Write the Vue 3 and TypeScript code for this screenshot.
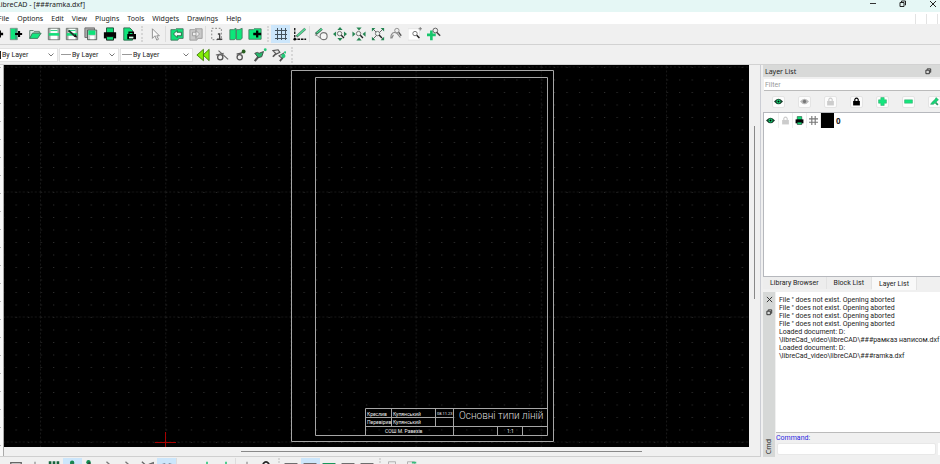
<script setup lang="ts">
interface Tool { icon: string; label: string; on?: boolean }
interface Group { name: string; lead: string; tools: Tool[] }

const t = (icon: string, label: string, on = false): Tool => ({ icon, label, on })

const menus: string[] = ['File', 'Options', 'Edit', 'View', 'Plugins', 'Tools', 'Widgets', 'Drawings', 'Help']

const mainGroups: Group[] = [
  { name: 'file', lead: '', tools: [t('new', 'New'), t('template', 'New from template'), t('open', 'Open'), t('save', 'Save'), t('saveas', 'Save as'), t('saveall', 'Save all'), t('print', 'Print'), t('preview', 'Print preview')] },
  { name: 'pick', lead: 'handle', tools: [t('cursor', 'Select')] },
  { name: 'pair', lead: 'sep', tools: [t('undo', 'Undo'), t('redo', 'Redo')] },
  { name: 'clip', lead: 'sep', tools: [t('cut', 'Cut'), t('copy', 'Copy'), t('paste', 'Paste')] },
  { name: 'grid', lead: 'handle', tools: [t('grid', 'Grid', true), t('draft', 'Draft')] },
  { name: 'zoom', lead: 'sep', tools: [t('redraw', 'Redraw'), t('zoomin', 'Zoom in'), t('zoomout', 'Zoom out'), t('zoomauto', 'Auto zoom'), t('zoomprev', 'Previous view'), t('zoomwin', 'Window zoom'), t('pan', 'Zoom panning')] }
]

const penTools: Tool[] = [t('back', 'Back'), t('circ', 'Pick pen'), t('circdot', 'Apply pen'), t('brush', 'Pen by active layer'), t('brushes', 'Copy pen')]

const snapGroups: Group[] = [
  { name: 'snap', lead: '', tools: [t('box', 'Exclusive snap'), t('tickmark', 'Free snap'), t('dots', 'Snap on grid'), t('point', 'Snap on endpoints', true), t('pointr', 'Snap on entity'), t('slope', 'Snap center'), t('slope', 'Snap middle'), t('slopes', 'Snap distance'), t('specks', 'Snap intersection', true)] },
  { name: 'restrict', lead: 'sep', tools: [t('', 'Restrict nothing'), t('plus', 'Restrict orthogonal'), t('plus', 'Restrict horizontal')] },
  { name: 'zero', lead: 'sep', tools: [t('tickmark', 'Set relative zero'), t('minilock', 'Lock relative zero')] },
  { name: 'dock', lead: 'handle', tools: [t('panel', 'Left dock'), t('panel', 'Right dock', true), t('panelg', 'Top dock'), t('panel', 'Bottom dock'), t('panel', 'Floating dock')] },
  { name: 'order', lead: 'handle', tools: [t('sheet', 'Move to top'), t('sheetg', 'Move to bottom')] }
]

const pens = [
  { name: 'color', label: 'Pen colour' },
  { name: 'width', label: 'Line width' },
  { name: 'type', label: 'Line type' }
]

const layerTools: Tool[] = [t('eye', 'Show all layers'), t('eyeoff', 'Hide all layers'), t('unlock', 'Unlock all layers'), t('lock', 'Lock all layers'), t('add', 'Add layer'), t('remove', 'Remove layer'), t('edit', 'Edit layer')]
const layerFlags: Tool[] = [t('eye', 'Visible'), t('unlock', 'Locked'), t('print', 'Print'), t('hash', 'Construction')]
const tabs: string[] = ['Library Browser', 'Block List', 'Layer List']

const log: string[] = [
  "File '' does not exist. Opening aborted",
  "File '' does not exist. Opening aborted",
  "File '' does not exist. Opening aborted",
  "File '' does not exist. Opening aborted",
  'Loaded document: D:',
  '\\libreCad_video\\libreCAD\\###рамказ написом.dxf',
  'Loaded document: D:',
  '\\libreCad_video\\libreCAD\\###ramka.dxf'
]
</script>

<template>
  <div class="app">
    <svg class="defs" aria-hidden="true">
      <symbol id="new" viewBox="0 0 16 16"><path d="M1 2h7v12H1z" fill="#0fef80" stroke="#555"/><path d="M7 8h8M11 4v8" stroke="#000" stroke-width="3"/></symbol>
      <symbol id="template" viewBox="0 0 16 16"><path d="M1.500 1.500h8v13h-8z" fill="#0fe77c" stroke="#7c9488"/><path d="M8 2v12" stroke="#567"/><path d="M7 8h8M11.500 4.500v7" stroke="#000" stroke-width="2.400"/></symbol>
      <symbol id="open" viewBox="0 0 16 16"><path d="M2 13V4h4l1 1h6v2H6z" fill="#d9eee4" stroke="#547365"/><path d="M2 13l3-6h10l-4 6z" fill="#12e77e" stroke="#3f7258"/></symbol>
      <symbol id="save" viewBox="0 0 16 16"><path d="M1.500 1.500h13v13h-13z" fill="#a4aaa7" stroke="#68706c"/><path d="M4 2h8v5H4z" fill="#f5fff9"/><path d="M2 7h12v3H2z" fill="#0fe37a"/><path d="M4 10h8v4H4z" fill="#fff"/><path d="M4 4h8" stroke="#18d279"/></symbol>
      <symbol id="saveas" viewBox="0 0 16 16"><use href="#save"/><path d="M4 4l7 6" stroke="#24372e" stroke-width="2"/><path d="M10 11l4 1-2-4z" fill="#111"/></symbol>
      <symbol id="saveall" viewBox="0 0 16 16"><path d="M1 1h11v11H1z" fill="#aaa" stroke="#686868"/><path d="M4 3.500h10.500v11H4z" fill="#c9cfcc" stroke="#4c5550"/><path d="M5 4h8v5H5z" fill="#0fe37a"/><path d="M7 10h5v4H7z" fill="#fff"/></symbol>
      <symbol id="print" viewBox="0 0 16 16"><path d="M4 1h8v6H4z" fill="#0ddd76" stroke="#154a30"/><path d="M1 6h14v7H1z" fill="#050505"/><path d="M4 11h8v4H4z" fill="#0fe37a" stroke="#111"/></symbol>
      <symbol id="preview" viewBox="0 0 16 16"><path d="M2 1h7l3 3v11H2z" fill="#0fe37a" stroke="#32664c"/><path d="M6 8h10v6H6z"/><path d="M8 9V6h5v3" fill="none" stroke="#000" stroke-width="1.500"/><path d="M8 12h5" stroke="#d7ffea" stroke-width="2"/></symbol>
      <symbol id="cursor" viewBox="0 0 16 16"><path d="M5 2v11l3-3 2 5 2-1-2-4h3z" fill="#f9f9f9" stroke="#858585"/></symbol>
      <symbol id="undo" viewBox="0 0 16 16"><path d="M1 3h5l1-1h8v11h-5l-1 2H1z" fill="#0fe37a" stroke="#47745e"/><path d="M4 8l4-4v2h5v4H8v2z" fill="#effff7" stroke="#24583d"/></symbol>
      <symbol id="redo" viewBox="0 0 16 16"><path d="M1 3h5l1-1h8v11h-5l-1 2H1z" fill="#c9c9c9" stroke="#999"/><path d="M8 2v12M12 8L8 4v2H4v4h4v2z" fill="#efefef" stroke="#999"/></symbol>
      <symbol id="cut" viewBox="0 0 16 16"><path d="M2 1.500h11v13H2z" fill="none" stroke="#777" stroke-dasharray="2 2"/><path d="M11 7v7M8 14h6M9 8h2" stroke="#444" stroke-width="1.500"/></symbol>
      <symbol id="copy" viewBox="0 0 16 16"><path d="M1 3h4l3-1.500V13l-2 1.500H1zM8.500 3h3L15 1.500V13l-2 1.500H8.500z" fill="#0ce77a" stroke="#497c62"/></symbol>
      <symbol id="paste" viewBox="0 0 16 16"><path d="M1 3h5l1-1h8v12H1z" fill="#0ce77a" stroke="#497c62"/><path d="M6 8h9M10.500 4v8" stroke="#000" stroke-width="2.600"/></symbol>
      <symbol id="grid" viewBox="0 0 14 14"><path d="M1 3.500h12M1 7.500h12M1 11.500h12M3.500 1v12M7.500 1v12M11.500 1v12" stroke="#44525c"/></symbol>
      <symbol id="draft" viewBox="0 0 16 16"><path d="M2 1v13h13" fill="none" stroke="#111" stroke-width="1.500" stroke-dasharray="3 1"/><path d="M4 11L14 2" stroke="#557f6a" stroke-width="3"/><path d="M5 10l9-8" stroke="#51e69a" stroke-width="1.300"/><circle cx="2" cy="14" r="1.500"/></symbol>
      <symbol id="redraw" viewBox="0 0 16 16"><circle cx="11" cy="10.500" r="4" fill="#f6f6f6" stroke="#777" stroke-width="1.300"/><path d="M2 8l7-6" stroke="#39664f" stroke-width="3"/><path d="M3 7l6-5" stroke="#50e59a" stroke-width="1.300"/><path d="M1 9l3 1 3 3" fill="none" stroke="#777"/></symbol>
      <symbol id="lens" viewBox="0 0 16 16"><circle cx="7.500" cy="7.500" r="2.500" fill="#eef5f1" stroke="#666"/><path d="M9.500 9.500l3 3" stroke="#222" stroke-width="1.600"/></symbol>
      <symbol id="zoomin" viewBox="0 0 16 16"><use href="#lens"/><path d="M8 0l3 3.500H5zM8 16l3-3.500H5zM0 8l3.500-3v6zM16 8l-3.500-3v6z" fill="#268653"/></symbol>
      <symbol id="zoomout" viewBox="0 0 16 16"><use href="#lens"/><path d="M8 4l3-3.500H5zM8 12l3 3.500H5zM4 8L.500 5v6zM12 8l3.500-3v6z" fill="#268653"/></symbol>
      <symbol id="zoomauto" viewBox="0 0 16 16"><path d="M2 2l12 12M14 2L2 14" stroke="#555"/><use href="#lens"/><path d="M1 1h4L1 5zM15 1v4l-4-4zM1 15v-4l4 4zM15 15h-4l4-4z" fill="#268653"/></symbol>
      <symbol id="zoomprev" viewBox="0 0 16 16"><path d="M2 13c0-6 3-8 7-6l4 5M3 13l2-4" fill="none" stroke="#888" stroke-width="1.300"/><circle cx="9" cy="4" r="2.500" fill="#eee" stroke="#888"/><path d="M11 6l3 4" stroke="#555" stroke-width="1.500"/></symbol>
      <symbol id="zoomwin" viewBox="0 0 16 16"><path d="M0 2h13v13H0z" fill="#fff" stroke="#e2e2e2"/><circle cx="8" cy="7.500" r="2.500" fill="#fff" stroke="#666"/><path d="M10 9.500l3 3" stroke="#222" stroke-width="1.800"/><path d="M12 2h4M14 0v4" stroke="#777"/></symbol>
      <symbol id="pan" viewBox="0 0 16 16"><path d="M0 9h10M5 4v11" stroke="#17c66c" stroke-width="3"/><circle cx="9.500" cy="4" r="2.700" fill="#eee" stroke="#555"/><path d="M11 6l4 4" stroke="#444" stroke-width="1.800"/></symbol>
      <symbol id="back" viewBox="0 0 16 16"><path d="M8.500 1.500v13L1 8zM15 1.500v13L8 8z" fill="#84ef09" stroke="#3f7810"/></symbol>
      <symbol id="circ" viewBox="0 0 16 16"><circle cx="6" cy="10.500" r="3" fill="none" stroke="#555" stroke-width="1.500"/><path d="M4 3l11 10M1 8l9-2" stroke="#666" stroke-width="1.300"/></symbol>
      <symbol id="circdot" viewBox="0 0 16 16"><circle cx="6.500" cy="10.500" r="3" fill="none" stroke="#555" stroke-width="1.500"/><path d="M3 7l5-1 3-2" fill="none" stroke="#555" stroke-width="1.500"/><circle cx="11" cy="4" r="2.200" fill="#275f20"/></symbol>
      <symbol id="brush" viewBox="0 0 16 16"><path d="M2 15l5-6" stroke="#555" stroke-width="2.500"/><path d="M2 6l3-1 2 1 5-2-2 6-4 1z" fill="#24b66c" stroke="#444"/><circle cx="14" cy="2" r="1.600" fill="#24c878"/></symbol>
      <symbol id="brushes" viewBox="0 0 16 16"><path d="M1 10l5-5M9 15l4-5" stroke="#555" stroke-width="2"/><path d="M1 3l6-1 2 3-4 2zM8 9l5-3-1 6z" fill="#e4e4e4" stroke="#555" stroke-width="1.300"/><circle cx="13" cy="9" r="2.400" fill="#24c878"/><circle cx="15" cy="5" r="1.300" fill="#24c878"/></symbol>
      <symbol id="eye" viewBox="0 0 16 16"><path d="M0 8q8-10 16 0q-8 10-16 0z" fill="#173d2b"/><circle cx="8" cy="8" r="3.500" fill="#14d876"/><circle cx="8" cy="8" r="1.800"/></symbol>
      <symbol id="eyeoff" viewBox="0 0 16 16"><path d="M0 8q8-10 16 0q-8 10-16 0z" fill="#b9b9b9"/><circle cx="8" cy="8" r="3" fill="#777"/></symbol>
      <symbol id="unlock" viewBox="0 0 16 16"><path d="M5 8V4q3-4 6 0v4" fill="none" stroke="#ccc" stroke-width="2"/><path d="M2 7h12v8H2z" fill="#ccc"/></symbol>
      <symbol id="lock" viewBox="0 0 16 16"><path d="M5 8V4q3-4 6 0v4" fill="none" stroke="#000" stroke-width="2"/><path d="M2 7h12v8H2z"/></symbol>
      <symbol id="add" viewBox="0 0 16 16"><path d="M5 1h6v4h4v6h-4v4H5v-4H1V5h4z" fill="#15e67e" stroke="#37ad70"/></symbol>
      <symbol id="remove" viewBox="0 0 16 16"><path d="M1 5h14v6H1z" fill="#15e67e" stroke="#37ad70"/></symbol>
      <symbol id="edit" viewBox="0 0 16 16"><path d="M1 13l3-4 5-5 2-3 4 4-3 3-6 5z" fill="#15d676" stroke="#259d60"/><path d="M10 10l4 4" stroke="#259d60" stroke-width="3"/></symbol>
      <symbol id="hash" viewBox="0 0 16 16"><path d="M0 5h16M0 11h16M5 0v16M11 0v16" stroke="#777" stroke-width="2"/></symbol>
      <symbol id="box" viewBox="0 0 16 16"><path d="M2 3h12v10H2z" fill="#e5e5e5" stroke="#666" stroke-width="1.500"/></symbol>
      <symbol id="tickmark" viewBox="0 0 16 16"><path d="M8 2v12M3 8h10" stroke="#666"/></symbol>
      <symbol id="dots" viewBox="0 0 16 16"><path d="M2 3h12M2 8h12M2 13h12" stroke="#16643c" stroke-width="3" stroke-dasharray="3 1.500"/></symbol>
      <symbol id="point" viewBox="0 0 16 16"><circle cx="7" cy="3" r="2.500" fill="#138b50"/><path d="M7 3l7 10" stroke="#555"/></symbol>
      <symbol id="pointr" viewBox="0 0 16 16"><circle cx="4" cy="2.500" r="2.500" fill="#138b50"/><path d="M4 3l9 9" stroke="#333" stroke-width="2"/></symbol>
      <symbol id="slope" viewBox="0 0 16 16"><path d="M4 2l9 8" stroke="#777" stroke-width="1.500"/></symbol>
      <symbol id="slopes" viewBox="0 0 16 16"><path d="M1 2l9 8M9 5l5-2v9" fill="none" stroke="#666" stroke-width="1.500"/></symbol>
      <symbol id="specks" viewBox="0 0 16 16"><path d="M3 5l3-1M10 4l3 1" stroke="#789" stroke-width="1.300"/></symbol>
      <symbol id="plus" viewBox="0 0 16 16"><path d="M8 2v12M4 6h8" stroke="#36c980" stroke-width="2"/></symbol>
      <symbol id="minilock" viewBox="0 0 16 16"><path d="M5 7V4q3-4 6 0v3" fill="none" stroke="#222" stroke-width="2"/><path d="M3 6h10v8H3z" fill="#222"/></symbol>
      <symbol id="panel" viewBox="0 0 16 16"><path d="M1 4h14v10H1z" fill="#ddd" stroke="#555"/><path d="M1 5h14" stroke="#777" stroke-width="2"/></symbol>
      <symbol id="panelg" viewBox="0 0 16 16"><path d="M1 4h14v10H1z" fill="#ddd" stroke="#355"/><path d="M1 5h14" stroke="#169c59" stroke-width="3"/></symbol>
      <symbol id="sheet" viewBox="0 0 16 16"><path d="M4 2h8v12H4z" fill="#eee" stroke="#aaa"/></symbol>
      <symbol id="sheetg" viewBox="0 0 16 16"><path d="M4 2h8v12H4z" fill="#eee" stroke="#aaa"/><path d="M9 3h5" stroke="#38bd7c" stroke-width="2"/></symbol>
      <symbol id="min" viewBox="0 0 8 8"><path d="M1 3.500h6" stroke="#333"/></symbol>
      <symbol id="restore" viewBox="0 0 8 8"><path d="M2.500 2V1h4v4H6M1 2.500h4v4H1z" fill="none" stroke="#222"/></symbol>
      <symbol id="close" viewBox="0 0 8 8"><path d="M1 1l6 6M7 1L1 7" stroke="#222"/></symbol>
    </svg>

    <header class="titlebar">
      <h1>LibreCAD - [###ramka.dxf]</h1>
      <div class="winctl">
        <button aria-label="Minimize"><svg><use href="#min"/></svg></button>
        <button aria-label="Restore"><svg><use href="#restore"/></svg></button>
        <button aria-label="Close"><svg><use href="#close"/></svg></button>
      </div>
    </header>

    <nav class="menubar">
      <button v-for="m in menus" :key="m">{{ m }}</button>
      <div class="mdi"><i></i><i></i><i></i></div>
    </nav>

    <div class="toolbar main">
      <template v-for="g in mainGroups" :key="g.name">
        <span v-if="g.lead" :class="g.lead"></span>
        <div class="group" :class="g.name">
          <button v-for="b in g.tools" :key="b.label" class="tool" :class="{ on: b.on }" :aria-label="b.label"><svg><use :href="'#' + b.icon"/></svg></button>
        </div>
      </template>
    </div>

    <div class="toolbar pen">
      <div v-for="p in pens" :key="p.name" class="combo" :class="p.name">
        <i class="sample"></i>
        <select :aria-label="p.label"><option>By Layer</option></select>
        <svg class="chev" viewBox="0 0 6 4"><path d="M.500.500L3 3 5.500.500" fill="none" stroke="#555" stroke-width=".8"/></svg>
      </div>
      <div class="group pens">
        <button v-for="b in penTools" :key="b.label" class="tool" :aria-label="b.label"><svg><use :href="'#' + b.icon"/></svg></button>
      </div>
      <span class="handle"></span>
    </div>

    <main class="work">
      <section class="view">
        <div class="ruler"></div>
        <svg class="canvas" viewBox="0 0 745 382" preserveAspectRatio="xMinYMin slice">
          <defs>
            <pattern id="dotgrid" x="-1" y="2" width="12.520" height="12.500" patternUnits="userSpaceOnUse"><path d="M0 0h1.200v1H0z" fill="#303030"/></pattern>
            <pattern id="metagrid" x="36" y="1.500" width="125.200" height="125" patternUnits="userSpaceOnUse"><path d="M.500 0v125M0 .500h125.200" stroke="#171717" stroke-dasharray="2 2"/></pattern>
          </defs>
          <rect width="745" height="382" fill="#000"/>
          <rect width="745" height="382" fill="url(#dotgrid)"/>
          <rect width="745" height="382" fill="url(#metagrid)"/>
          <g fill="none" stroke="#a6a6a6">
            <path d="M287.500 5.500h262v371h-262zM311.500 12.500h232v358h-232z"/>
            <path d="M361.500 370V343.500H543M361.500 352.500H449M361.500 361.500H543M387.500 343v18M431.500 343v18M449.500 343v27M493.500 361v9M518.500 361v9"/>
          </g>
          <path d="M151 377.500h21M161.500 367v15" stroke="#a80000" fill="none"/>
          <g class="stamp">
            <text x="363" y="351">Креслив</text>
            <text x="389" y="351">Купянський</text>
            <text x="433" y="350" class="date">08.11.23</text>
            <text x="363" y="359">Перевірив</text>
            <text x="389" y="359">Купянський</text>
            <text x="381" y="368">СОШ М. Равехів</text>
            <text x="503" y="368">1:1</text>
            <text x="455" y="354" class="heading">Основні типи ліній</text>
          </g>
        </svg>
        <div class="vscroll"><i></i></div>
        <div class="hscroll"><i></i></div>
      </section>

      <aside class="side">
        <section class="layers">
          <h2 class="dockhead"><span>Layer List</span><svg><use href="#restore"/></svg></h2>
          <input class="filter" placeholder="Filter" aria-label="Filter">
          <div class="layertools">
            <button v-for="b in layerTools" :key="b.label" :aria-label="b.label"><svg><use :href="'#' + b.icon"/></svg></button>
          </div>
          <div class="list">
            <table>
              <tbody>
                <tr>
                  <td v-for="f in layerFlags" :key="f.label" class="flag"><svg role="img" :aria-label="f.label"><use :href="'#' + f.icon"/></svg></td>
                  <td class="swatch"></td>
                  <td class="lname">0</td>
                </tr>
              </tbody>
            </table>
          </div>
        </section>
        <div class="tabs" role="tablist">
          <button v-for="n in tabs" :key="n" role="tab" :class="{ active: n === 'Layer List' }">{{ n }}</button>
        </div>
        <section class="cmd">
          <div class="rail">
            <button aria-label="Close"><svg><use href="#close"/></svg></button>
            <button aria-label="Float"><svg><use href="#restore"/></svg></button>
            <span>Cmd</span>
          </div>
          <div class="console">
            <div class="log"><p v-for="(l, i) in log" :key="i">{{ l }}</p></div>
            <label for="command">Command:</label>
            <div class="entry"><input id="command"><button aria-label="Options"></button></div>
          </div>
        </section>
      </aside>
    </main>

    <footer class="toolbar snapbar">
      <template v-for="g in snapGroups" :key="g.name">
        <span v-if="g.lead" :class="g.lead"></span>
        <div class="group" :class="g.name">
          <button v-for="b in g.tools" :key="b.label" class="tool" :class="{ on: b.on }" :aria-label="b.label"><svg><use :href="'#' + b.icon"/></svg></button>
        </div>
      </template>
    </footer>
  </div>
</template>

<style>
body { margin: 0; overflow: hidden; }
</style>

<style scoped>
* { box-sizing: border-box; }
.app { height: 100vh; display: flex; flex-direction: column; overflow: hidden; background: #f0f0f0; color: #222; font: 7px/8px "Noto Sans", "Open Sans", sans-serif; }
.defs { position: absolute; width: 0; height: 0; }
button, input, select { font: inherit; color: inherit; margin: 0; padding: 0; border: 0; background: none; outline: 0; }
h1, h2, p { margin: 0; font: inherit; white-space: nowrap; }
.titlebar { flex: none; height: 12px; display: flex; justify-content: space-between; background: #e5f7f5; }
.titlebar h1 { line-height: 9px; margin-left: -3px; }
.winctl { display: flex; gap: 22px; padding-right: 3px; }
.winctl button { width: 8px; height: 8px; }
.winctl svg { display: block; width: 8px; height: 8px; }
.menubar { flex: none; height: 12px; display: flex; gap: 8px; padding-top: 1px; background: #fff; align-items: center; }
.menubar button:first-child { margin-left: -2px; }
.mdi { margin-left: auto; display: flex; gap: 10px; padding-right: 2px; }
.mdi i { width: 1px; height: 10px; background: #e3e3e3; }
.toolbar { flex: none; display: flex; align-items: center; height: 20px; border-bottom: 1px solid #d2d2d2; }
.main { height: 21px; }
.group { flex: none; display: flex; }
.tool { flex: 1; height: 18px; display: flex; align-items: center; justify-content: center; }
.tool svg { flex: none; width: 14px; height: 14px; }
.on { background: #cce6fb; }
.file { width: 150px; margin-left: -12px; }
.pick { width: 20px; }
.pair { width: 37px; }
.clip { width: 56px; }
.grid { width: 38px; }
.zoom { width: 131px; }
.pens { width: 94px; }
.handle { flex: none; width: 4px; height: 16px; margin-left: 3px; border-left: 2px dotted #d6d6d6; }
.sep { flex: none; width: 3px; height: 16px; border-left: 1px solid #ddd; }
.combo { flex: none; display: flex; align-items: center; height: 14px; margin-right: 1px; padding: 0 3px 0 1px; background: #fff; border: 1px solid #e2e2e2; }
.color { width: 58px; border-left: 0; padding-left: 0; }
.width { width: 60px; }
.type { width: 73px; }
.sample { width: 10px; height: 1px; margin-right: 1px; background: #999; }
.color .sample { width: 1px; height: 8px; background: #222; }
.combo select { flex: 1; min-width: 0; appearance: none; height: 12px; }
.combo select, .tabs, .log, .console label { font: 7px/8px Roboto, "Noto Sans", sans-serif; }
.chev { width: 6px; height: 4px; }
.work { flex: 1; min-height: 0; display: flex; }
.view { flex: 1; min-width: 0; display: grid; grid-template: 1fr 9px / 4px 1fr 11px; border-right: 1px solid #cbcdd4; border-bottom: 1px solid #cfcfcf; }
.ruler { background: repeating-linear-gradient(#f8f8f8 0 2px, #b5b5b5 2px 3px, #f8f8f8 3px 18px) 0 0 / 1px 100% no-repeat #f8f8f8; border-right: 1px solid #aaa; grid-row: span 2; }
.canvas { display: block; width: 100%; height: 100%; min-height: 0; background: #000; }
.vscroll { padding: 61px 0 87px 5px; }
.vscroll i { display: block; width: 1px; height: 173px; background: #888; }
.hscroll { padding: 4px 0 0 237px; }
.hscroll i { display: block; width: 79%; height: 1px; background: #888; }
.stamp { font: 5px Roboto, "Noto Sans", sans-serif; fill: #eee; }
.stamp .date { font-size: 4px; }
.stamp .heading { font: 300 10px Roboto, sans-serif; fill: #ddd; }
.side { flex: none; width: 177px; margin-left: 2px; display: flex; flex-direction: column; }
.layers { flex: none; height: 212px; display: flex; flex-direction: column; }
.dockhead { flex: none; display: flex; justify-content: space-between; align-items: center; height: 12px; padding: 1px 8px 0 2px; background: #d8d9d8; }
.dockhead svg { width: 7px; height: 7px; }
.filter { flex: none; height: 12px; margin: 2px 0 0 1px; padding-left: 1px; background: #fff; border-bottom: 1px solid #bbb; font-family: Roboto, sans-serif; }
.filter::placeholder { color: #999; }
.layertools { flex: none; height: 21px; display: flex; gap: 13px; align-items: center; padding-left: 9px; overflow: hidden; }
.layertools button { flex: none; width: 13px; height: 12px; display: grid; place-items: center; background: #fcfcfc; border: 1px solid #e4e4e4; border-radius: 2px; }
.layertools svg { width: 9px; height: 9px; }
.list { flex: 1; background: #fff; border: 1px solid #b6b8bd; border-right: 0; }
table { border-collapse: collapse; }
td { padding: 0; height: 15px; }
.flag { width: 14px; border-right: 1px solid #eee; text-align: center; }
.flag svg { display: block; margin: auto; width: 9px; height: 9px; }
.swatch { width: 14px; background: #000; }
.lname { padding-left: 2px; font-size: 8px; font-weight: 700; }
.tabs { flex: none; display: flex; height: 13px; }
.tabs button { padding: 0 7px; border-right: 1px solid #e2e2e2; background: #ededed; height: 12px; }
.tabs .active { height: 13px; padding: 1px 7px 0; background: #f9f9f9; }
.cmd { flex: 1; min-height: 0; display: flex; margin-top: 2px; }
.rail { flex: none; width: 12px; display: flex; flex-direction: column; align-items: center; gap: 6px; padding: 4px 0 3px; background: #d6d8d7; }
.rail button, .rail svg { display: block; width: 7px; height: 7px; }
.rail span { margin-top: auto; writing-mode: vertical-rl; transform: rotate(180deg); }
.console { flex: 1; min-width: 0; display: flex; flex-direction: column; padding-left: 1px; }
.log { flex: 1; min-height: 0; padding: 4px 3px; background: #fff; border-bottom: 1px solid #bbb; overflow: hidden; }
.console label { flex: none; color: #2a1fe0; padding: 1px 0 0; }
.entry { flex: none; display: flex; gap: 2px; height: 15px; padding: 1px 0 2px 1px; }
.entry input { flex: 1; min-width: 0; background: #fff; border: 1px solid #e8e8e8; border-radius: 2px; }
.entry button { width: 2px; background: #fff; }
.snapbar { height: 7px; align-items: flex-start; overflow: hidden; border: 0; padding-top: 1px; }
.snap { width: 169px; margin-left: 7px; }
.restrict { width: 56px; }
.zero { width: 37px; }
.dock { width: 94px; }
.order { width: 37px; }
</style>
